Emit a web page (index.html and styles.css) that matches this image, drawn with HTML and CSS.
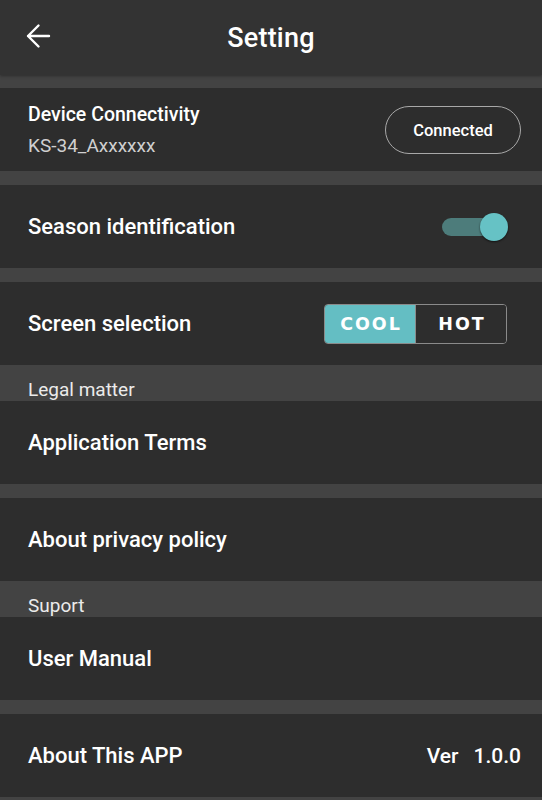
FILE: index.html
```html
<!DOCTYPE html>
<html>
<head>
<meta charset="utf-8">
<link rel="stylesheet" href="styles.css">
</head>
<body>
<div class="screen">
  <header class="appbar">
    <svg class="back" width="26" height="28" viewBox="0 0 26 28"><path d="M3 14H24M13.5 3.5L3 14L13.5 24.5" fill="none" stroke="#fff" stroke-width="2.4" stroke-linecap="round" stroke-linejoin="round"/></svg>
    <h1 class="title">Setting</h1>
  </header>
  <div class="gap top"></div>
  <div class="row">
    <div class="stack">
      <div class="label small">Device Connectivity</div>
      <div class="sub">KS-34_Axxxxxx</div>
    </div>
    <div class="pill">Connected</div>
  </div>
  <div class="gap"></div>
  <div class="row">
    <div class="label">Season identification</div>
    <div class="switch"><div class="track"></div><div class="thumb"></div></div>
  </div>
  <div class="gap"></div>
  <div class="row">
    <div class="label">Screen selection</div>
    <div class="seg"><div class="seg-item on">COOL</div><div class="seg-item">HOT</div></div>
  </div>
  <div class="section">Legal matter</div>
  <div class="row">
    <div class="label">Application Terms</div>
  </div>
  <div class="gap"></div>
  <div class="row">
    <div class="label">About privacy policy</div>
  </div>
  <div class="section">Suport</div>
  <div class="row">
    <div class="label">User Manual</div>
  </div>
  <div class="gap"></div>
  <div class="row">
    <div class="label">About This APP</div>
    <div class="ver"><span>Ver</span><span>1.0.0</span></div>
  </div>
</div>
</body>
</html>
```
FILE: styles.css
```css
html, body {
  margin: 0;
  padding: 0;
  background: #434343;
  font-family: Roboto, "Noto Sans", sans-serif;
  color: #fff;
}
.screen {
  display: flex;
  flex-direction: column;
  width: 542px;
  height: 800px;
  overflow: hidden;
}
.appbar {
  height: 75px;
  flex: none;
  background: #333333;
  display: flex;
  align-items: center;
  justify-content: center;
  position: relative;
  box-shadow: 0 1px 3px rgba(0,0,0,0.35);
  z-index: 1;
}
.back {
  position: absolute;
  left: 25px;
  top: 22px;
}
.title {
  margin: 0;
  font-size: 27px;
  font-weight: 500;
  letter-spacing: 0.2px;
}
.gap {
  height: 14px;
  flex: none;
}
.gap.top { height: 13px; }
.row {
  height: 83px;
  flex: none;
  background: #2d2d2d;
  display: flex;
  align-items: center;
  justify-content: space-between;
  padding: 0 21px 0 28px;
}
.label {
  font-size: 22px;
  font-weight: 500;
}
.label.small {
  font-size: 19.5px;
}
.stack {
  display: flex;
  flex-direction: column;
  gap: 8px;
  margin-top: 0;
}
.sub {
  font-size: 19px;
  color: #d0d0d0;
}
.pill {
  width: 134px;
  height: 46px;
  border: 1.5px solid #a8a8a8;
  border-radius: 25px;
  display: flex;
  align-items: center;
  justify-content: center;
  font-size: 16.5px;
  font-weight: 500;
  margin-top: 1px;
}
.switch {
  position: relative;
  width: 66px;
  height: 28px;
  margin-right: 13px;
}
.track {
  position: absolute;
  left: 0;
  top: 5px;
  width: 58px;
  height: 18px;
  border-radius: 9px;
  background: #4d7c7b;
}
.thumb {
  position: absolute;
  left: 38px;
  top: 0;
  width: 28px;
  height: 28px;
  border-radius: 50%;
  background: #66c2c5;
  box-shadow: 0 1px 2px rgba(0,0,0,0.6);
}
.seg {
  display: flex;
  width: 181px;
  height: 38px;
  border: 1.5px solid #8a8a8a;
  border-radius: 4px;
  overflow: hidden;
  margin-right: 14px;
}
.seg-item {
  flex: 1;
  display: flex;
  align-items: center;
  justify-content: center;
  font-family: "DejaVu Sans", sans-serif;
  font-weight: bold;
  font-size: 17.5px;
  letter-spacing: 2px;
  padding-left: 2px;
  color: #fff;
  background: #2d2d2d;
}
.seg-item.on {
  background: #64bec3;
  border-right: 1px solid #8a8a8a;
}
.section {
  height: 36px;
  flex: none;
  box-sizing: border-box;
  padding: 14px 0 0 28px;
  font-size: 19px;
  color: #ebebeb;
  line-height: 22px;
}
.ver {
  display: flex;
  gap: 15px;
  font-size: 21px;
  font-weight: 500;
}
```
